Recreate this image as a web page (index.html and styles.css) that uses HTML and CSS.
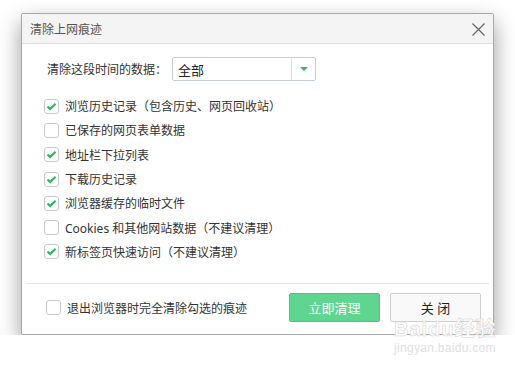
FILE: index.html
```html
<!DOCTYPE html>
<html lang="zh-CN">
<head>
  <meta charset="UTF-8" />
  <title>清除上网痕迹</title>
  <link rel="stylesheet" href="styles.css">
</head>
<body>
  <!-- 对话框 -->
  <div class="dialog">
    <div class="dialog-head">
      <span class="dialog-title">清除上网痕迹</span>
      <span class="dialog-close">
        <svg width="13" height="13" viewBox="0 0 13 13"><path d="M0.5 0.5 L12.5 12.5 M12.5 0.5 L0.5 12.5" stroke="#666" stroke-width="1.2" fill="none"/></svg>
      </span>
    </div>

    <div class="dialog-body">
      <div class="time-row">
        <span class="time-label">清除这段时间的数据：</span>
        <div class="select">
          <span class="select-value">全部</span>
          <span class="select-arrow"><i class="triangle"></i></span>
        </div>
      </div>

      <ul class="check-list">
        <li class="check-item"><span class="box checked"></span>浏览历史记录（包含历史、网页回收站）</li>
        <li class="check-item"><span class="box"></span>已保存的网页表单数据</li>
        <li class="check-item"><span class="box checked"></span>地址栏下拉列表</li>
        <li class="check-item"><span class="box checked"></span>下载历史记录</li>
        <li class="check-item"><span class="box checked"></span>浏览器缓存的临时文件</li>
        <li class="check-item"><span class="box"></span>Cookies 和其他网站数据（不建议清理）</li>
        <li class="check-item"><span class="box checked"></span>新标签页快速访问（不建议清理）</li>
      </ul>
    </div>

    <div class="dialog-foot">
      <label class="check-item foot-check"><span class="box"></span>退出浏览器时完全清除勾选的痕迹</label>
      <button class="btn btn-green">立即清理</button>
      <button class="btn btn-plain">关 闭</button>
    </div>
  </div>

  <!-- 水印 -->
  <div class="watermark">
    <div class="wm-logo">Baidu经验</div>
    <div class="wm-url">jingyan.baidu.com</div>
  </div>
</body>
</html>
```

FILE: styles.css
```css
body {
  margin: 0;
  padding: 13px 0 0 21px;
  background: #fff;
  font-family: "Noto Sans", "Noto Sans CJK SC", sans-serif;
  font-size: 12px;
  color: #333;
}

.dialog {
  width: 471px;
  height: 320px;
  border: 1px solid #a9a9a9;
  border-radius: 2px;
  background: #fff;
  box-shadow: 0 9px 22px rgba(0, 0, 0, 0.4);
  display: flex;
  flex-direction: column;
}

.dialog-head {
  height: 29px;
  background: #f4f4f4;
  border-bottom: 1px solid #dcdcdc;
  display: flex;
  align-items: center;
  justify-content: space-between;
  padding: 0 8px 0 8px;
}

.dialog-title {
  font-size: 12px;
  color: #555;
}

.dialog-close {
  display: flex;
  margin-top: 1px;
}

.dialog-body {
  flex: 1;
  padding: 13px 0 0 22px;
}

.time-row {
  display: flex;
  align-items: center;
  padding-left: 3px;
}

.time-label {
  width: 125px;
}

.select {
  width: 142px;
  height: 22px;
  border: 1px solid #c6cfd8;
  border-radius: 2px;
  display: flex;
  align-items: center;
}

.select-value {
  flex: 1;
  padding-left: 5px;
  font-size: 13px;
  color: #222;
}

.select-arrow {
  width: 23px;
  height: 22px;
  border-left: 1px solid #dde2e7;
  display: flex;
  align-items: center;
  justify-content: center;
}

.triangle {
  width: 0;
  height: 0;
  border-left: 4px solid transparent;
  border-right: 4px solid transparent;
  border-top: 4px solid #34b365;
}

.check-list {
  list-style: none;
  margin: 13px 0 0 0;
  padding: 0;
}

.check-item {
  height: 24.3px;
  display: flex;
  align-items: center;
  color: #333;
}

/* 复选框 */
.box {
  box-sizing: border-box;
  width: 15px;
  height: 15px;
  border: 1px solid #c9c9c9;
  border-radius: 3px;
  background: #fff;
  margin-right: 6px;
  flex: none;
}

.box.checked {
  background: #fff url("data:image/svg+xml,%3Csvg xmlns='http://www.w3.org/2000/svg' width='13' height='13' viewBox='0 0 13 13'%3E%3Cpath d='M2.5 6.5 L5.2 9 L10.5 3.8' stroke='%2329b35a' stroke-width='2' fill='none'/%3E%3C/svg%3E") center no-repeat;
}

.dialog-foot {
  margin: 0 4px;
  height: 51px;
  border-top: 1px solid #e3e5e8;
  display: flex;
  align-items: flex-start;
  padding-top: 9px;
  box-sizing: border-box;
}

.foot-check {
  margin: 0 0 0 20px;
  height: 29px;
  width: 243px;
}

.btn {
  box-sizing: border-box;
  width: 91px;
  height: 29px;
  border-radius: 2px;
  font-family: "Noto Sans", "Noto Sans CJK SC", sans-serif;
  font-size: 13px;
  cursor: pointer;
}

.btn-green {
  background: #5fd68f;
  border: 1px solid #4fc47e;
  color: #fff;
}

.btn-plain {
  margin-left: 10px;
  background: #f9f9f9;
  border: 1px solid #cfcfcf;
  color: #222;
}

/* 水印 */
.watermark {
  position: absolute;
  left: 394px;
  top: 319px;
  color: #fff;
  -webkit-text-stroke: 0.6px #d4d4d4;
  line-height: 1;
}

.wm-logo {
  font-family: "Liberation Sans", "Noto Sans CJK SC", sans-serif;
  font-size: 20px;
  font-weight: bold;
  letter-spacing: 1px;
}

.wm-url {
  margin-top: 3px;
  font-family: "Liberation Sans", sans-serif;
  font-size: 12px;
  letter-spacing: 0.3px;
  -webkit-text-stroke: 0;
  color: #e0e0e0;
}
```
